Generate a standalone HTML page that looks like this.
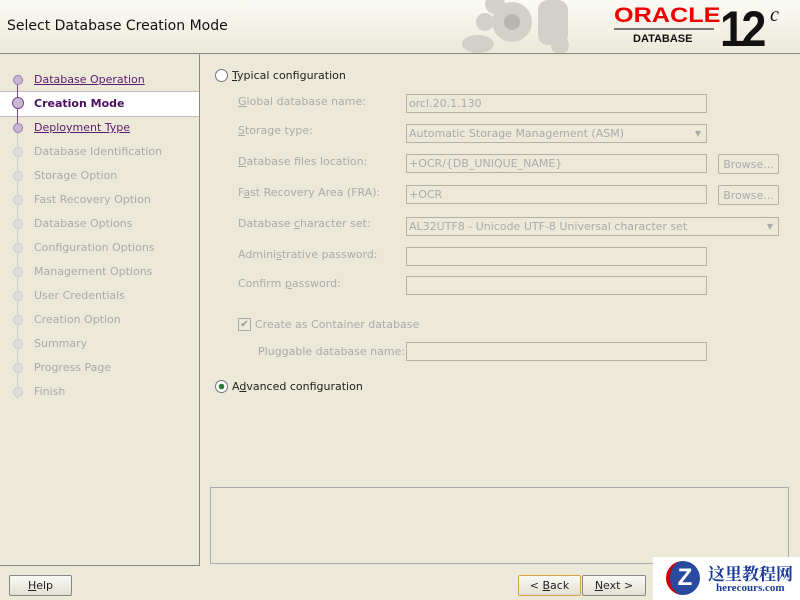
<!DOCTYPE html><html><head><style>
body{margin:0;width:800px;height:600px;background:#ece9d8;font-family:"DejaVu Sans","Liberation Sans",sans-serif;font-size:11px;position:relative;overflow:hidden;color:#222}
.a{position:absolute}
.hdr{left:0;top:0;width:800px;height:53px;background:linear-gradient(#fbfaf6,#ece9d8);border-bottom:1px solid #888}
.nav{left:0;top:54px;width:199px;height:511px;border-right:1px solid #888;border-bottom:1px solid #888}
.it{position:absolute;left:34px;color:#aaa}
.lk{color:#5a1a6e;text-decoration:underline}
.dot{position:absolute;left:13px;width:8px;height:8px;border-radius:50%;background:#ddd;border:1px solid #ccc}
.lb{position:absolute;left:238px;color:#aaa}
.in{position:absolute;left:406px;width:301px;border:1px solid #b5b2a4;background:#ece9d8;color:#aaa;line-height:17px;padding-left:2px;box-sizing:border-box;height:19px}
.br{position:absolute;left:718px;width:61px;height:20px;border:1px solid #b5b2a4;border-radius:2px;color:#aaa;text-align:center;line-height:19px;box-sizing:border-box}
.btn{position:absolute;top:575px;height:21px;border:1px solid #888;border-radius:2px;background:linear-gradient(#fafaf6,#e3e0d2);text-align:center;line-height:20px;box-sizing:border-box;color:#222}
.rad{position:absolute;width:11px;height:11px;border:1px solid #777;border-radius:50%;background:#fff}
</style></head><body>
<div class="a hdr"></div>
<div class="a" style="left:7px;top:18px;font-size:14px;color:#111">Select Database Creation Mode</div>
<svg class="a" style="left:440px;top:0" width="150" height="53"><g fill="#d2d0c8"><circle cx="72" cy="22" r="20"/><circle cx="45" cy="22" r="9"/><ellipse cx="38" cy="44" rx="16" ry="9"/><rect x="98" y="0" width="30" height="45" rx="10"/><circle cx="55" cy="4" r="10"/><circle cx="120" cy="45" r="9"/></g><circle cx="72" cy="22" r="8" fill="#b8b6ae"/></svg>
<div class="a" style="left:614px;top:4px;color:#e00;font:bold 21px 'Liberation Sans',sans-serif;transform:scaleX(1.2);transform-origin:left">ORACLE</div>
<div class="a" style="left:614px;top:28px;width:100px;border-top:2px solid #777"></div>
<div class="a" style="left:633px;top:33px;font:bold 11px 'Liberation Sans',sans-serif;color:#111">DATABASE</div>
<div class="a" style="left:720px;top:0px;font:bold 50px 'Liberation Sans',sans-serif;color:#111;letter-spacing:-4px;transform:scaleX(0.9);transform-origin:left">12</div>
<div class="a" style="left:770px;top:4px;font:italic 20px 'Liberation Serif',serif;color:#111">c</div>
<div class="a nav"></div>
<div class="a" style="left:0;top:91px;width:199px;height:24px;background:#fff;border-top:1px solid #bbb;border-bottom:1px solid #bbb"></div>
<div class="a" style="left:17px;top:79px;width:1px;height:320px;background:#ccc"></div>
<div class="a" style="left:17px;top:79px;width:1px;height:50px;background:#7a4a8a"></div>
<div class="dot" style="top:75px;background:#c9b8d4;border-color:#a07ab0"></div><div class="it lk" style="top:73px">Database Operation</div>
<div class="dot" style="top:97px;background:#c9b8d4;border-color:#7a4a8a;width:10px;height:10px;left:12px"></div><div class="it" style="top:97px;color:#4a1060;font-weight:bold">Creation Mode</div>
<div class="dot" style="top:123px;background:#c9b8d4;border-color:#a07ab0"></div><div class="it lk" style="top:121px">Deployment Type</div>
<div class="dot" style="top:147px"></div><div class="it" style="top:145px">Database Identification</div>
<div class="dot" style="top:171px"></div><div class="it" style="top:169px">Storage Option</div>
<div class="dot" style="top:195px"></div><div class="it" style="top:193px">Fast Recovery Option</div>
<div class="dot" style="top:219px"></div><div class="it" style="top:217px">Database Options</div>
<div class="dot" style="top:243px"></div><div class="it" style="top:241px">Configuration Options</div>
<div class="dot" style="top:267px"></div><div class="it" style="top:265px">Management Options</div>
<div class="dot" style="top:291px"></div><div class="it" style="top:289px">User Credentials</div>
<div class="dot" style="top:315px"></div><div class="it" style="top:313px">Creation Option</div>
<div class="dot" style="top:339px"></div><div class="it" style="top:337px">Summary</div>
<div class="dot" style="top:363px"></div><div class="it" style="top:361px">Progress Page</div>
<div class="dot" style="top:387px"></div><div class="it" style="top:385px">Finish</div>

<div class="rad" style="left:215px;top:69px"></div><div class="a" style="left:232px;top:69px"><u>T</u>ypical configuration</div>
<div class="lb" style="top:95px"><u>G</u>lobal database name:</div><div class="in" style="top:94px">orcl.20.1.130</div>
<div class="lb" style="top:124px"><u>S</u>torage type:</div><div class="in" style="top:124px">Automatic Storage Management (ASM)<span style="position:absolute;right:5px;font-size:8px">▼</span></div>
<div class="lb" style="top:155px"><u>D</u>atabase files location:</div><div class="in" style="top:154px">+OCR/{DB_UNIQUE_NAME}</div><div class="br" style="top:154px">Browse...</div>
<div class="lb" style="top:186px">F<u>a</u>st Recovery Area (FRA):</div><div class="in" style="top:185px">+OCR</div><div class="br" style="top:185px">Browse...</div>
<div class="lb" style="top:217px">Database <u>c</u>haracter set:</div><div class="in" style="top:217px;width:373px">AL32UTF8 - Unicode UTF-8 Universal character set<span style="position:absolute;right:5px;font-size:8px">▼</span></div>
<div class="lb" style="top:248px">Admini<u>s</u>trative password:</div><div class="in" style="top:247px"></div>
<div class="lb" style="top:277px">Confirm <u>p</u>assword:</div><div class="in" style="top:276px"></div>
<div class="a" style="left:238px;top:318px;width:11px;height:11px;border:1px solid #aaa;color:#999;font-size:10px;line-height:11px;text-align:center">✔</div>
<div class="lb" style="top:318px;left:255px">Create as Container database</div>
<div class="lb" style="top:345px;left:258px">Pluggable database name:</div><div class="in" style="top:342px"></div>
<div class="rad" style="left:215px;top:380px;background:radial-gradient(#2a7a3a 0 2.5px,#fff 3px)"></div><div class="a" style="left:232px;top:380px">A<u>d</u>vanced configuration</div>
<div class="a" style="left:210px;top:487px;width:577px;height:75px;border:1px solid #aaa"></div>
<div class="btn" style="left:9px;width:63px"><u>H</u>elp</div>
<div class="btn" style="left:518px;width:63px;border-color:#d6a14b">&lt; <u>B</u>ack</div>
<div class="btn" style="left:582px;width:64px"><u>N</u>ext &gt;</div>
<div class="a" style="left:653px;top:557px;width:147px;height:43px;background:#fff"></div>
<div class="a" style="left:666px;top:561px;width:34px;height:34px;border-radius:50%;background:#2a4aa0;border-left:4px solid #c00;color:#fff;font:bold 24px 'Liberation Sans';text-align:center;line-height:34px;box-sizing:border-box">Z</div>
<div class="a" style="left:708px;top:560px;font:bold 17px 'Noto Serif CJK SC',serif;color:#1a3a9a">这里教程网</div>
<div class="a" style="left:716px;top:582px;font:bold 11px 'Liberation Serif',serif;color:#1a3a9a">herecours.com</div>
</body></html>
